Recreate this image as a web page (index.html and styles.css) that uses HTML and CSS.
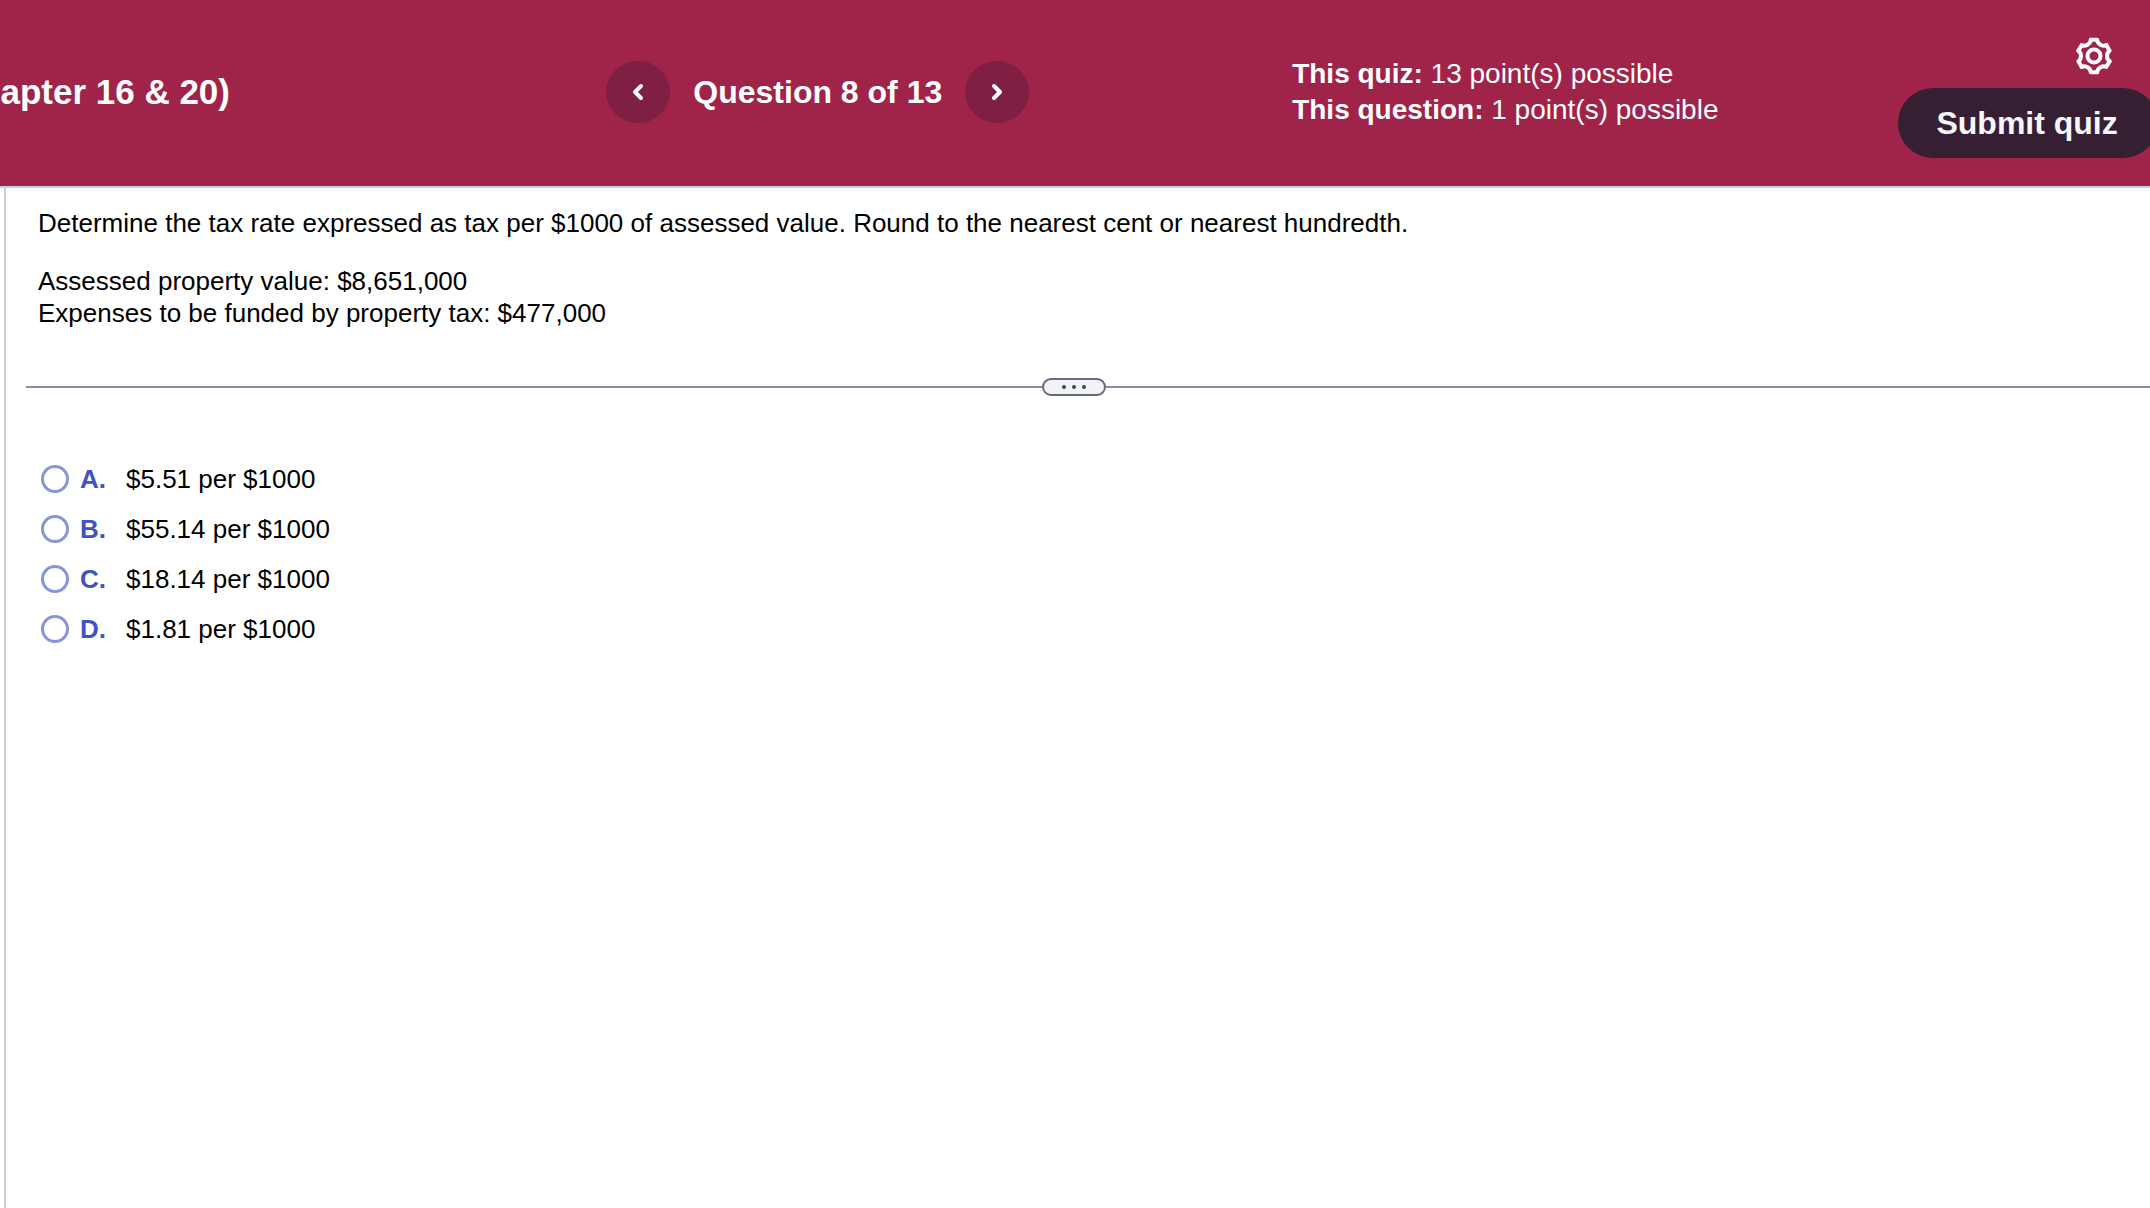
FILE: index.html
```html
<!DOCTYPE html>
<html lang="en">
<head>
<meta charset="utf-8">
<meta name="viewport" content="width=device-width, initial-scale=1">
<title>Question 8 of 13</title>
<link rel="stylesheet" href="styles.css">
</head>
<body>
	<header class="quiz-header">
		<h1 class="quiz-title">apter 16 &amp; 20)</h1>

		<nav class="question-nav">
			<button class="nav-btn" type="button" aria-label="Previous question">
				<svg width="12" height="18" viewBox="0 0 12 18"><path d="M9 3L3 9l6 6"/></svg>
			</button>
			<h2 class="question-count">Question 8 of 13</h2>
			<button class="nav-btn" type="button" aria-label="Next question">
				<svg width="12" height="18" viewBox="0 0 12 18"><path d="M3 3l6 6-6 6"/></svg>
			</button>
		</nav>

		<div class="points">
			<p><strong>This quiz:</strong> 13 point(s) possible</p>
			<p><strong>This question:</strong> 1 point(s) possible</p>
		</div>

		<div class="actions">
			<button class="settings-btn" type="button" aria-label="Settings">
				<svg width="36" height="36" viewBox="0 0 36 36">
					<path id="tooth" d="M14.8 1.800h6.400C21.400 5 22.500 5.600 24.500 6.700S27.600 8.600 30.400 7.100"/>
					<use href="#tooth" transform="rotate(60 18 18)"/>
					<use href="#tooth" transform="rotate(120 18 18)"/>
					<use href="#tooth" transform="rotate(180 18 18)"/>
					<use href="#tooth" transform="rotate(240 18 18)"/>
					<use href="#tooth" transform="rotate(300 18 18)"/>
					<circle cx="18" cy="18" r="6.500"/>
				</svg>
			</button>
			<button class="submit-btn" type="button">Submit quiz</button>
		</div>
	</header>

	<main class="workspace">
		<section class="prompt">
			<p>Determine the tax rate expressed as tax per $1000 of assessed value. Round to the nearest cent or nearest hundredth.</p>
			<p>Assessed property value: $8,651,000<br>Expenses to be funded by property tax: $477,000</p>
		</section>

		<div class="divider">
			<button class="divider-btn" type="button" aria-label="Resize question area"><i></i><i></i><i></i></button>
		</div>

		<form class="choices">
			<label class="choice"><input type="radio" name="answer" value="A"><b>A.</b><span>$5.51 per $1000</span></label>
			<label class="choice"><input type="radio" name="answer" value="B"><b>B.</b><span>$55.14 per $1000</span></label>
			<label class="choice"><input type="radio" name="answer" value="C"><b>C.</b><span>$18.14 per $1000</span></label>
			<label class="choice"><input type="radio" name="answer" value="D"><b>D.</b><span>$1.81 per $1000</span></label>
		</form>
	</main>
</body>
</html>
```

FILE: styles.css
```css
* {
	box-sizing: border-box;
}

body {
	display: flex;
	flex-direction: column;
	min-height: 100vh;
	margin: 0;
	overflow-x: hidden;
	background: #fff;
	color: #000;
	font-family: "Liberation Sans", Arial, sans-serif;
	font-size: 26px;
	line-height: 32px;
}

h1, h2, p {
	margin: 0;
}

button {
	padding: 0;
	border: none;
	color: inherit;
	font-family: inherit;
	cursor: pointer;
}

svg {
	display: block;
	fill: none;
	stroke: currentColor;
	stroke-width: 4;
	stroke-linecap: round;
	stroke-linejoin: round;
	overflow: visible;
}

/* header */
.quiz-header {
	display: grid;
	grid-template-columns: minmax(0, 282fr) minmax(0, 319fr) minmax(0, 282fr) minmax(0, 117fr);
	align-items: center;
	min-height: 188px;
	padding-bottom: 2px;
	border-bottom: 2px solid #cccedd;
	background: #a0244a;
	color: #fff;
	white-space: nowrap;
}

.quiz-title {
	display: flex;
	justify-content: flex-end;
	width: 230px;
	font-size: 35px;
	line-height: 44px;
}

.question-nav {
	display: flex;
	align-items: center;
	gap: 23px;
}

.nav-btn {
	display: flex;
	align-items: center;
	justify-content: center;
	width: 64px;
	height: 62px;
	border-radius: 50%;
	background: #7f1f43;
}

.question-count {
	font-size: 32px;
	line-height: 36px;
}

.points {
	font-size: 28px;
	line-height: 36px;
}

.actions {
	display: flex;
	flex-direction: column;
	align-self: start;
	gap: 14px;
	padding-top: 38px;
}

.settings-btn {
	align-self: flex-end;
	margin-right: 38px;
	background: none;
}

.submit-btn {
	align-self: flex-start;
	height: 70px;
	padding: 0 40px 0 38px;
	border-radius: 35px;
	background: #371f33;
	color: #f5f7fd;
	font-size: 32px;
	font-weight: bold;
}

/* question */
.workspace {
	flex: 1;
	margin-left: 4px;
	border-left: 2px solid #cccedd;
}

.prompt {
	display: grid;
	gap: 26px;
	padding: 19px 32px 49px;
}

.divider {
	display: flex;
	align-items: center;
	margin-left: 20px;
}

.divider::before,
.divider::after {
	content: "";
	height: 2px;
	background: #8b8ca3;
}

.divider::before {
	width: calc(50% - 46px);
}

.divider::after {
	flex: 1;
}

.divider-btn {
	display: flex;
	align-items: center;
	justify-content: center;
	gap: 6px;
	width: 64px;
	height: 18px;
	border: 2px solid #656b7c;
	border-radius: 9px;
	background: #f2f3f6;
}

.divider-btn i {
	width: 4px;
	height: 4px;
	border-radius: 50%;
	background: #45464d;
}

/* answers */
.choices {
	padding: 58px 35px;
}

.choice {
	display: grid;
	grid-template-columns: 39px 46px auto;
	align-items: center;
	justify-content: start;
	height: 50px;
}

.choice b {
	color: #3f53c4;
}

.choice input {
	appearance: none;
	width: 28px;
	height: 28px;
	margin: 0;
	border: 3px solid #8795df;
	border-radius: 50%;
	background: #fff;
}

.choice input:checked {
	background: #3f53c4;
	box-shadow: inset 0 0 0 4px #fff;
}
```
